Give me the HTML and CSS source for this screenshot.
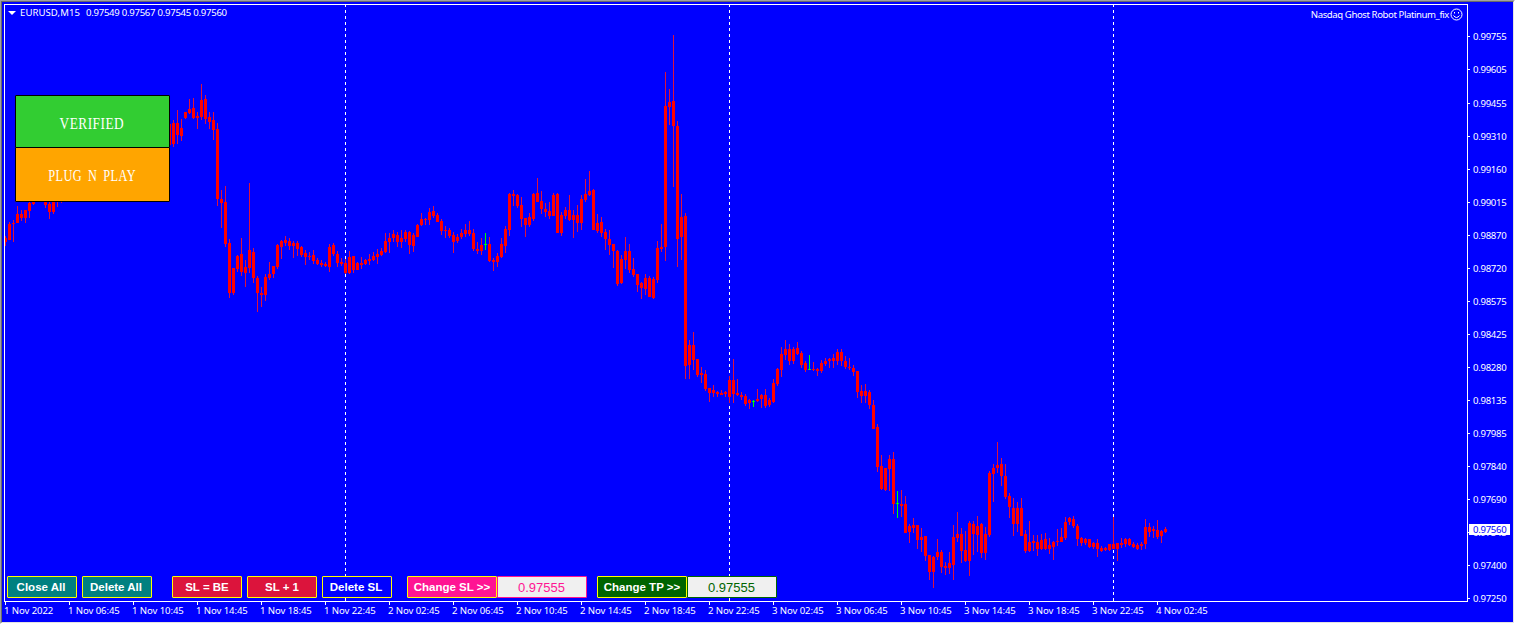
FILE: index.html
```
<!DOCTYPE html>
<html lang="en">
<head>
    <meta charset="UTF-8">
    <meta name="viewport" content="width=device-width, initial-scale=1.0">
    <title>EURUSD,M15</title>
    <link rel="stylesheet" href="styles.css">
</head>
<body>
    <div class="window">
        <div class="chart">
            <div class="plot">
                <svg id="candles" viewBox="5 5 1462 596" shape-rendering="crispEdges">
                    <g class="separators">
                        <line x1="345.5" y1="4" x2="345.5" y2="601" />
                        <line x1="729.5" y1="4" x2="729.5" y2="601" />
                        <line x1="1113.5" y1="4" x2="1113.5" y2="601" />
                    </g>
                </svg>

                <div class="title">
                    <svg class="arrow" width="8" height="4"><path d="M0 0H8L4 4Z" /></svg>
                    <span class="symbol">EURUSD,M15</span>
                    <span class="ohlc">0.97549 0.97567 0.97545 0.97560</span>
                    <span class="expert">Nasdaq Ghost Robot Platinum_fix</span>
                    <svg class="smiley" width="13" height="13" viewBox="0 0 13 13">
                        <circle cx="6.5" cy="6.5" r="5.5" />
                        <path d="M4.5 4V5.5M8.5 4V5.5M3.5 7.5Q6.5 11.5 9.5 7.5" />
                    </svg>
                </div>

                <div class="badges">
                    <div class="badge verified"><span>VERIFIED</span></div>
                    <div class="badge plug"><span>PLUG N PLAY</span></div>
                </div>

                <div class="toolbar">
                    <button class="btn teal">Close All</button>
                    <button class="btn teal">Delete All</button>
                    <button class="btn red gap">SL = BE</button>
                    <button class="btn red">SL + 1</button>
                    <button class="btn blue">Delete SL</button>
                    <div class="field sl">
                        <button class="btn">Change SL &gt;&gt;</button>
                        <input type="text" value="0.97555">
                    </div>
                    <div class="field tp">
                        <button class="btn">Change TP &gt;&gt;</button>
                        <input type="text" value="0.97555">
                    </div>
                </div>
            </div>
            <div class="prices" id="prices">
                <div class="current">0.97560</div>
            </div>
            <div class="times" id="times"></div>
        </div>
    </div>

    <script src="chart.js"></script>
</body>
</html>
```
FILE: styles.css
```
body {
    margin: 0;
    width: 1515px;
    height: 624px;
    overflow: hidden;
    background-color: #fff;
    font-family: "Noto Sans", "DejaVu Sans", sans-serif;
    font-size: 9.6px;
    color: #fff;
}
.window {
    box-sizing: border-box;
    width: 1515px;
    height: 624px;
    border: 1px solid #fff;
    border-top-color: #a0a0a0;
    border-left-color: #a0a0a0;
}
.chart {
    box-sizing: border-box;
    height: 622px;
    display: grid;
    grid-template-columns: 1464px 1fr;
    grid-template-rows: 598px 1fr;
    padding: 2px 0 0 2px;
    border: 1px solid #e3e3e3;
    border-top-color: #696969;
    border-left-color: #696969;
    background-color: #00f;
}
.plot {
    position: relative;
    border: 1px solid #fff;
    overflow: hidden;
}
#candles {
    display: block;
    width: 1462px;
    height: 596px;
}
.separators line {
    stroke: #fff;
    stroke-dasharray: 3 3;
}
.wick {
    fill: #dc143c;
}
.body {
    fill: #f00;
}
.doji {
    fill: #0f0;
}

/* header line */
.title {
    position: absolute;
    top: 0;
    left: 3px;
    right: 3px;
    height: 16px;
    display: flex;
    align-items: center;
    white-space: pre;
}
.arrow {
    fill: #fff;
    margin-right: 4px;
}
.symbol {
    width: 66px;
    margin-bottom: 2px;
    letter-spacing: 0.05px;
}
.ohlc {
    margin-bottom: 2px;
    letter-spacing: -0.28px;
}
.expert {
    margin-left: auto;
    padding-top: 2px;
    letter-spacing: -0.42px;
}
.smiley {
    margin: 3px 1px 0 1px;
    fill: none;
    stroke: #fff;
}

.badges {
    position: absolute;
    top: 90px;
    left: 10px;
    width: 155px;
}
.badge {
    box-sizing: border-box;
    display: flex;
    align-items: center;
    justify-content: center;
    padding-right: 1px;
    border: 1px solid #000;
    border-radius: 1px;
    font-family: "Liberation Serif", serif;
    font-size: 16px;
    letter-spacing: 0.6px;
}
.verified {
    height: 53px;
    padding-top: 4px;
    background-color: #32cd32;
}
.verified span {
    transform: scaleX(0.83);
}
.plug {
    height: 55px;
    margin-top: -1px;
    padding-top: 2px;
    background-color: #ffa500;
    word-spacing: 3px;
}
.plug span {
    transform: scaleX(0.77);
}

/* trade buttons */
.toolbar {
    position: absolute;
    left: 2px;
    bottom: 3px;
    display: flex;
    gap: 5px;
}
.btn {
    box-sizing: border-box;
    width: 70px;
    height: 22px;
    padding: 0 2px 0 0;
    border: 1px solid #ff0;
    border-radius: 1px;
    font: bold 11.5px "Liberation Sans", Arial, sans-serif;
    color: #fff;
    white-space: nowrap;
}
.teal {
    background-color: #008080;
}
.red {
    padding: 0;
    background-color: #dc143c;
}
.blue {
    background-color: #00f;
}
.gap {
    margin-left: 15px;
}
.field {
    display: flex;
    margin-left: 10px;
}
.field + .field {
    margin-left: 5px;
}
.field .btn {
    width: 90px;
    padding: 0;
}
.field input {
    box-sizing: border-box;
    width: 90px;
    height: 22px;
    padding: 0 1px 0 0;
    border: 1px solid;
    border-radius: 1px;
    background-color: #f0f0f0;
    font: 13px "Liberation Sans", Arial, sans-serif;
    text-align: center;
}
.sl .btn {
    background-color: #ff1493;
}
.sl input {
    color: #ff1493;
}
.tp .btn {
    background-color: #006400;
}
.tp input {
    color: #006400;
}

/* price scale */
.prices {
    position: relative;
    padding-top: 16px;
}
.price {
    display: flex;
    align-items: center;
    height: 33px;
    letter-spacing: -0.3px;
}
.price::before {
    content: "";
    width: 2px;
    height: 1px;
    margin-right: 3px;
    background-color: #fff;
}
.price:nth-of-type(4) {
    margin-top: 1px;
}
.current {
    position: absolute;
    top: 520px;
    left: 1px;
    width: 37px;
    height: 11px;
    padding-left: 4px;
    line-height: 11px;
    letter-spacing: -0.3px;
    background-color: #fff;
    color: #00f;
}

/* time scale */
.times {
    grid-column: 1 / 3;
    display: flex;
}
.time {
    flex: 0 0 64px;
    line-height: 12px;
    white-space: nowrap;
    letter-spacing: -0.1px;
}
.time::before {
    content: "";
    display: block;
    width: 1px;
    height: 3px;
    margin-left: 1px;
    background-color: #fff;
}
```
FILE: chart.js
```
const SVG_NS = 'http://www.w3.org/2000/svg';

// [index of first bar, [high, body top, body bottom, low], ...]
const segments = [
    [0, [236,238,242,246], [222,224,240,240], [220,223,224,242], [206,214,223,223], [210,214,218,221],
        [210,210,218,223], [201,203,211,218], [200,201,204,205]],
    [10, [200,200,205,208], [201,204,212,219], [200,200,212,214], [198,198,202,207], [198,198,201,203]],
    [41, [124,124,145,145], [120,123,144,147], [110,123,135,144], [119,128,136,141], [112,112,118,119],
        [99,109,113,114], [98,108,118,119], [112,116,118,129], [84,100,117,120], [95,99,119,124],
        [112,117,122,129], [112,120,130,140], [123,129,199,206], [190,199,203,228], [186,202,244,247],
        [239,243,293,298], [268,268,293,295], [255,256,269,272], [238,254,272,276], [260,267,273,287],
        [183,250,268,273], [248,252,278,283], [276,278,293,312], [287,293,295,307], [274,277,295,301],
        [262,274,278,280], [266,266,274,278], [244,245,267,269], [240,241,247,259], [236,240,243,246],
        [238,241,246,250], [241,243,246,258], [241,243,249,256], [246,247,255,257], [250,253,257,265],
        [252,256,257,260], [250,255,261,264], [258,260,264,265], [260,263,265,267], [262,264,266,267],
        [244,247,267,272], [243,245,254,256], [251,254,263,267], [258,262,264,266], [259,263,273,274]],
    [86, [251,257,273,274], [256,256,270,273], [262,263,270,270], [257,263,265,269], [259,260,264,265],
        [254,259,261,265], [252,256,260,261], [249,254,257,264], [248,251,255,256], [233,241,252,253],
        [233,238,242,253], [230,234,238,242], [232,235,242,247], [230,238,242,248], [230,232,239,242],
        [231,232,245,254], [233,235,246,252], [224,225,237,237], [213,219,225,226], [218,219,220,225],
        [208,212,220,225], [206,211,216,218], [213,215,222,222], [219,221,231,235], [226,230,231,238],
        [228,230,236,238], [232,235,242,253], [234,237,241,243], [229,233,237,239], [224,230,234,237],
        [221,230,234,236], [229,233,249,251], [242,249,251,254], [238,245,251,255], [233,244,245,250],
        [237,244,261,262], [258,260,262,271], [253,256,262,267], [238,244,257,258], [226,229,246,253],
        [193,194,230,236], [190,194,196,206], [194,195,206,208], [197,205,219,227], [218,218,225,237],
        [213,217,225,227], [193,194,219,221], [178,193,202,202], [191,201,209,214], [203,209,212,217],
        [202,211,216,219], [193,195,216,216], [193,194,233,233], [212,215,233,236], [207,210,216,219],
        [195,210,220,221], [210,215,220,238], [205,215,223,232], [195,199,223,230], [179,194,200,202],
        [171,191,195,196], [189,190,230,230], [214,223,231,233], [217,222,233,237], [229,232,239,250],
        [230,239,245,255], [244,244,251,268], [250,251,284,286], [255,259,283,284], [237,251,260,269],
        [244,251,270,273], [258,269,275,277], [274,274,285,292], [282,283,288,299], [274,278,289,295],
        [276,278,297,297], [277,279,298,299], [241,248,280,283], [224,247,249,252], [72,106,247,261],
        [89,102,107,125], [35,101,126,187], [121,126,239,267], [194,217,237,260], [213,216,366,379],
        [340,345,365,379], [332,345,360,370], [359,359,375,377], [367,373,375,383], [370,374,389,391],
        [388,388,393,402], [385,390,393,397], [391,392,394,397], [390,393,395,395], [391,392,394,397]],
    [181, [376,380,397,403], [359,380,394,403], [379,393,395,396], [392,395,397,400], [394,396,404,406],
        [399,400,403,409], [400,401,402,407], [389,399,401,402], [394,395,399,408], [389,395,406,408],
        [398,400,405,407], [379,383,402,403], [368,369,384,386], [347,354,370,377], [340,349,355,360],
        [344,349,361,365], [347,349,361,364], [342,348,354,355], [351,353,365,368], [361,363,370,372],
        [355,369,370,370], [362,369,370,371], [368,369,371,376], [360,363,371,373], [358,361,364,366],
        [358,359,361,368], [354,358,361,368], [349,352,361,365], [349,352,361,366], [356,361,367,369],
        [358,367,368,370], [365,368,372,376], [371,371,392,398], [385,391,396,403], [384,391,396,403],
        [390,392,405,409], [400,405,429,429], [424,427,467,472], [455,466,489,490], [468,468,490,491],
        [455,459,469,491], [452,459,504,514], [491,503,504,518], [490,504,506,517], [496,504,533,533],
        [524,526,532,543], [518,525,528,533], [525,525,540,549], [528,537,540,552], [536,536,556,561],
        [555,555,572,580], [556,557,572,588], [539,552,557,560], [550,552,567,573], [562,566,568,575],
        [552,563,568,574], [525,537,565,580], [512,534,538,542], [528,534,551,563], [531,550,561,562],
        [521,523,561,576], [521,524,534,555], [516,526,535,552], [523,524,553,558], [527,534,553,560],
        [471,473,535,537], [464,468,474,502], [442,465,468,473], [458,464,476,486], [464,476,497,499],
        [493,496,507,518], [498,508,524,536], [502,508,524,532], [498,508,536,536], [530,534,551,553],
        [521,542,551,552], [535,541,543,551], [535,542,549,556], [534,540,549,550], [533,539,549,550],
        [538,545,549,554], [541,542,547,560], [529,541,542,546], [528,537,542,542], [517,522,538,540],
        [517,518,522,525], [516,519,526,528], [524,526,539,546], [537,538,543,546], [538,539,543,545],
        [539,539,547,548], [542,543,547,549], [539,543,549,557], [546,548,551,552], [547,548,550,551]],
    [276, [544,544,550,551], [517,544,549,549], [543,543,549,561], [538,543,545,548], [538,539,544,547],
        [538,539,545,546], [542,544,547,548], [543,545,549,550], [542,544,546,550], [519,527,544,549],
        [523,527,532,537], [526,529,531,538], [520,530,537,539], [530,531,536,543], [527,529,532,533]]
];

// bars that closed where they opened
const dojis = [120, 187, 201, 223];

const svg = document.getElementById('candles');

function addRect(cls, x, y, width, height) {
    const rect = document.createElementNS(SVG_NS, 'rect');
    rect.setAttribute('class', cls);
    rect.setAttribute('x', x);
    rect.setAttribute('y', y);
    rect.setAttribute('width', width);
    rect.setAttribute('height', height);
    svg.appendChild(rect);
}

segments.forEach(([start, ...bars]) => {
    bars.forEach(([high, top, bottom, low], i) => {
        const doji = dojis.includes(start + i);
        const x = 5 + (start + i) * 4;
        addRect(doji ? 'doji' : 'wick', x, high, 1, low - high);
        addRect(doji ? 'doji' : 'body', x - 1, top, 3, bottom - top);
    });
});

const prices = ['0.99755', '0.99605', '0.99455', '0.99310', '0.99160', '0.99015', '0.98870', '0.98720', '0.98575',
    '0.98425', '0.98280', '0.98135', '0.97985', '0.97840', '0.97690', '0.97545', '0.97400', '0.97250'];
const times = ['1 Nov 2022', '1 Nov 06:45', '1 Nov 10:45', '1 Nov 14:45', '1 Nov 18:45', '1 Nov 22:45',
    '2 Nov 02:45', '2 Nov 06:45', '2 Nov 10:45', '2 Nov 14:45', '2 Nov 18:45', '2 Nov 22:45',
    '3 Nov 02:45', '3 Nov 06:45', '3 Nov 10:45', '3 Nov 14:45', '3 Nov 18:45', '3 Nov 22:45', '4 Nov 02:45'];

function addLabels(id, cls, labels) {
    labels.forEach(text => {
        const div = document.createElement('div');
        div.className = cls;
        div.textContent = text;
        document.getElementById(id).appendChild(div);
    });
}

addLabels('prices', 'price', prices);
addLabels('times', 'time', times);
```
